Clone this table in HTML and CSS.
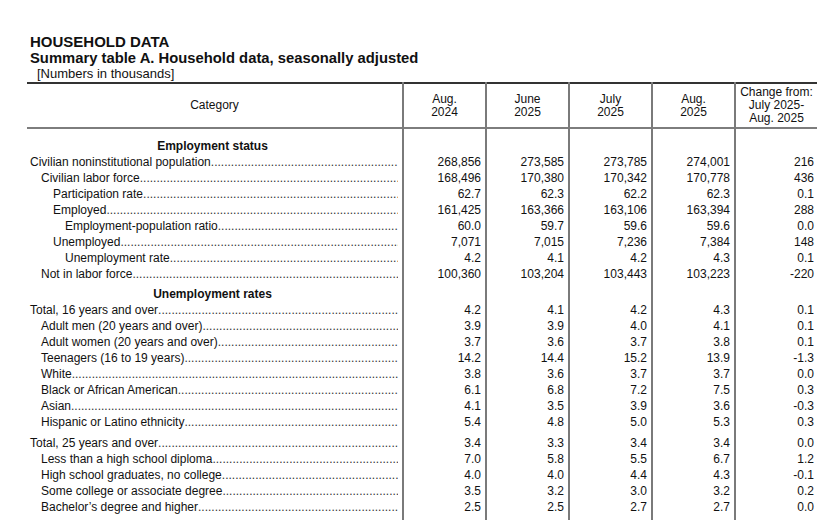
FILE: index.html
```html
<!DOCTYPE html>
<html lang="en">
<head>
<meta charset="utf-8">
<title>Household data</title>
<link rel="stylesheet" href="styles.css">
</head>
<body>
<div class="page">
  <h1 class="title">HOUSEHOLD DATA</h1>
  <h2 class="subtitle">Summary table A. Household data, seasonally adjusted</h2>
  <p class="note">[Numbers in thousands]</p>
  <table class="data">
    <colgroup>
      <col class="c-cat"><col class="c-num"><col class="c-num"><col class="c-num"><col class="c-num"><col class="c-chg">
    </colgroup>
    <thead>
      <tr>
        <th class="h-cat">Category</th>
        <th class="h-num">Aug.<br>2024</th>
        <th class="h-num">June<br>2025</th>
        <th class="h-num">July<br>2025</th>
        <th class="h-num">Aug.<br>2025</th>
        <th class="h-num">Change from:<br>July 2025-<br>Aug. 2025</th>
      </tr>
    </thead>
    <tbody>
      <tr class="sec first"><td class="sec-title">Employment status</td><td></td><td></td><td></td><td></td><td></td></tr>
      <tr><td><div class="lead l0"><span>Civilian noninstitutional population</span></div></td><td>268,856</td><td>273,585</td><td>273,785</td><td>274,001</td><td>216</td></tr>
      <tr><td><div class="lead l1"><span>Civilian labor force</span></div></td><td>168,496</td><td>170,380</td><td>170,342</td><td>170,778</td><td>436</td></tr>
      <tr><td><div class="lead l2"><span>Participation rate</span></div></td><td>62.7</td><td>62.3</td><td>62.2</td><td>62.3</td><td>0.1</td></tr>
      <tr><td><div class="lead l2"><span>Employed</span></div></td><td>161,425</td><td>163,366</td><td>163,106</td><td>163,394</td><td>288</td></tr>
      <tr><td><div class="lead l3"><span>Employment-population ratio</span></div></td><td>60.0</td><td>59.7</td><td>59.6</td><td>59.6</td><td>0.0</td></tr>
      <tr><td><div class="lead l2"><span>Unemployed</span></div></td><td>7,071</td><td>7,015</td><td>7,236</td><td>7,384</td><td>148</td></tr>
      <tr><td><div class="lead l3"><span>Unemployment rate</span></div></td><td>4.2</td><td>4.1</td><td>4.2</td><td>4.3</td><td>0.1</td></tr>
      <tr><td><div class="lead l1"><span>Not in labor force</span></div></td><td>100,360</td><td>103,204</td><td>103,443</td><td>103,223</td><td>-220</td></tr>
      <tr class="sec"><td class="sec-title">Unemployment rates</td><td></td><td></td><td></td><td></td><td></td></tr>
      <tr><td><div class="lead l0"><span>Total, 16 years and over</span></div></td><td>4.2</td><td>4.1</td><td>4.2</td><td>4.3</td><td>0.1</td></tr>
      <tr><td><div class="lead l1"><span>Adult men (20 years and over)</span></div></td><td>3.9</td><td>3.9</td><td>4.0</td><td>4.1</td><td>0.1</td></tr>
      <tr><td><div class="lead l1"><span>Adult women (20 years and over)</span></div></td><td>3.7</td><td>3.6</td><td>3.7</td><td>3.8</td><td>0.1</td></tr>
      <tr><td><div class="lead l1"><span>Teenagers (16 to 19 years)</span></div></td><td>14.2</td><td>14.4</td><td>15.2</td><td>13.9</td><td>-1.3</td></tr>
      <tr><td><div class="lead l1"><span>White</span></div></td><td>3.8</td><td>3.6</td><td>3.7</td><td>3.7</td><td>0.0</td></tr>
      <tr><td><div class="lead l1"><span>Black or African American</span></div></td><td>6.1</td><td>6.8</td><td>7.2</td><td>7.5</td><td>0.3</td></tr>
      <tr><td><div class="lead l1"><span>Asian</span></div></td><td>4.1</td><td>3.5</td><td>3.9</td><td>3.6</td><td>-0.3</td></tr>
      <tr><td><div class="lead l1"><span>Hispanic or Latino ethnicity</span></div></td><td>5.4</td><td>4.8</td><td>5.0</td><td>5.3</td><td>0.3</td></tr>
      <tr class="gap"><td><div class="lead l0"><span>Total, 25 years and over</span></div></td><td>3.4</td><td>3.3</td><td>3.4</td><td>3.4</td><td>0.0</td></tr>
      <tr><td><div class="lead l1"><span>Less than a high school diploma</span></div></td><td>7.0</td><td>5.8</td><td>5.5</td><td>6.7</td><td>1.2</td></tr>
      <tr><td><div class="lead l1"><span>High school graduates, no college</span></div></td><td>4.0</td><td>4.0</td><td>4.4</td><td>4.3</td><td>-0.1</td></tr>
      <tr><td><div class="lead l1"><span>Some college or associate degree</span></div></td><td>3.5</td><td>3.2</td><td>3.0</td><td>3.2</td><td>0.2</td></tr>
      <tr><td><div class="lead l1"><span>Bachelor’s degree and higher</span></div></td><td>2.5</td><td>2.5</td><td>2.7</td><td>2.7</td><td>0.0</td></tr>
      <tr class="tail"><td></td><td></td><td></td><td></td><td></td><td></td></tr>
    </tbody>
  </table>
</div>
</body>
</html>
```

FILE: styles.css
```css
html, body {
  margin: 0;
  padding: 0;
  background: #ffffff;
}

body {
  font-family: "Liberation Sans", Arial, sans-serif;
  color: #111111;
}

.page {
  padding: 34px 0 0 27px;
  width: 790px;
}

.title,
.subtitle {
  margin: 0 0 0 3px;
  font-size: 15px;
  font-weight: bold;
  line-height: 16px;
}

.subtitle {
  font-size: 14.8px;
}

.note {
  margin: 1px 0 0 10px;
  font-size: 13px;
  line-height: 14px;
}

.data {
  border-collapse: collapse;
  table-layout: fixed;
  width: 790px;
  margin-top: 1px;
  font-size: 12px;
}

.c-cat { width: 376px; }
.c-num { width: 83px; }
.c-chg { width: 82px; }

.data thead tr {
  border-top: 2px solid #333333;
  border-bottom: 2px solid #7d7d7d;
}

.data th {
  font-weight: normal;
  line-height: 13px;
  height: 43px;
  padding: 0;
  text-align: center;
  vertical-align: middle;
}

.data th + th,
.data td + td {
  border-left: 2px solid #7a7a7a;
}

.data td {
  padding: 0 4px 0 0;
  height: 16px;
  line-height: 16px;
  text-align: right;
  white-space: nowrap;
  vertical-align: middle;
}

.data td:last-child {
  padding-right: 3px;
}

.data td:first-child {
  text-align: left;
  padding-right: 4px;
}

.sec-title {
  font-weight: bold;
  text-align: center !important;
  padding-left: 0;
}

.data tbody tr.sec td {
  padding-top: 4px;
}

.data tbody tr.sec.first td {
  padding-top: 9px;
}

.data tbody tr.gap td {
  padding-top: 5px;
}

.data tbody tr.tail td {
  height: 20px;
}

.lead {
  display: flex;
  overflow: hidden;
  white-space: nowrap;
}

.lead span {
  flex: none;
}

.lead::after {
  content: "........................................................................................................................................................................";
  flex: 1 1 auto;
  overflow: hidden;
  color: #333333;
}

.l0 { padding-left: 3px; }
.l1 { padding-left: 14px; }
.l2 { padding-left: 26px; }
.l3 { padding-left: 38px; }
```
